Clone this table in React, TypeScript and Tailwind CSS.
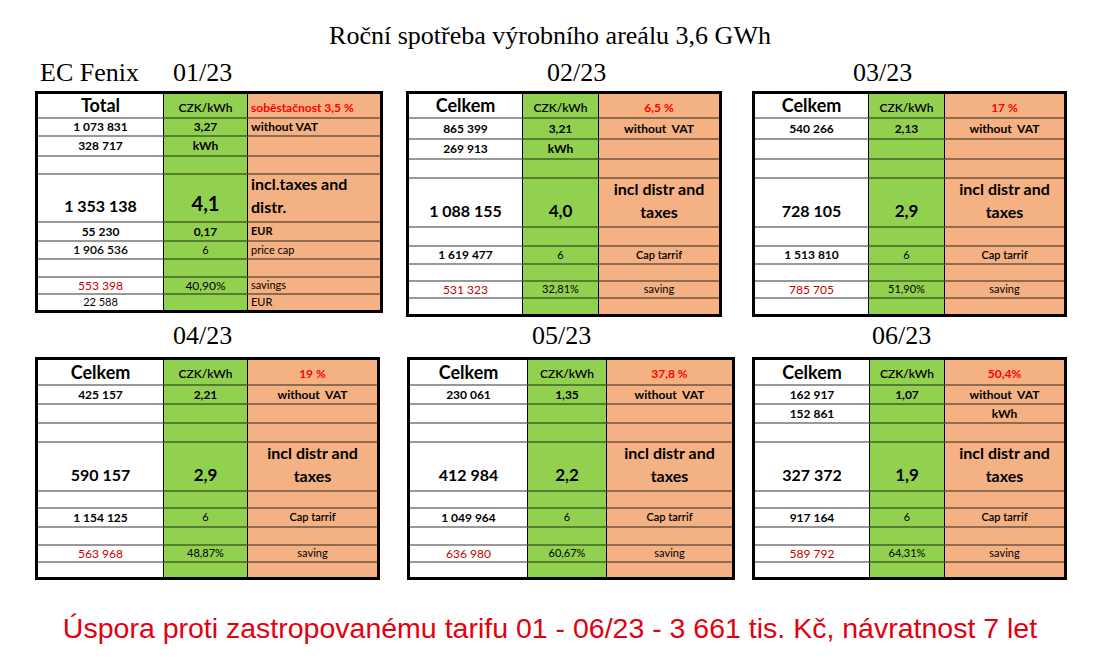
import type { ReactNode } from "react";

type Cell = { t?: ReactNode; c?: string };
type Row = { h: string; cells: [Cell, Cell, Cell]; big?: boolean };

const b12 = "text-[12px] font-bold";
const sb11 = "text-[11px] font-semibold";
const n11 = "text-[11px]";
const n12 = "text-[12px]";
const red = "text-[#ff0000] font-bold text-[12px]";
const redNum = "text-[#c00000] text-[12px]";
const bigNum = "text-[16px] font-bold";
const bigTxt = "text-[16px] font-bold leading-[23px] text-center";
const hdr = "text-[18px] font-bold";
const czk = "text-[12px] font-semibold pt-[4px]";

const e: Cell = {};

function Sheet({
  w,
  c1,
  c2,
  rows,
  leftText,
}: {
  w: string;
  c1: string;
  c2: string;
  rows: Row[];
  leftText?: boolean;
}) {
  return (
    <div className={`${w} flex flex-col border-[3px] border-black`}>
      {rows.map((r, i) => {
        const line = i === rows.length - 1 ? "" : "border-b-2 border-b-black/40";
        const align = r.big ? "items-end pb-[3px]" : "items-center";
        const [a, b, c] = r.cells;
        return (
          <div key={i} className={`flex ${r.h}`}>
            <div className={`${c1} shrink-0 flex justify-center bg-white ${align} ${line} ${a.c ?? ""}`}>{a.t}</div>
            <div
              className={`${c2} shrink-0 flex justify-center bg-[#92d050] border-x border-x-black ${align} ${line} ${b.c ?? ""}`}
            >
              {b.t}
            </div>
            <div
              className={`flex-1 flex bg-[#f4b183] ${leftText ? "justify-start pl-[3px]" : "justify-center"} ${align} ${line} ${c.c ?? ""}`}
            >
              {c.t}
            </div>
          </div>
        );
      })}
    </div>
  );
}

const topH = ["h-[25px]", "h-[21px]", "h-[20px]", "h-[19px]", "h-[49px]", "h-[19px]", "h-[18px]", "h-[17px]", "h-[17px]", "h-[15px]"];
const botH = ["h-[26px]", "h-[19px]", "h-[19px]", "h-[19px]", "h-[49px]", "h-[17px]", "h-[19px]", "h-[18px]", "h-[17px]", "h-[14px]"];

type Month = {
  pct: string;
  a: string;
  price: string;
  second?: [string, string];
  secondMid?: [string, string];
  total: string;
  incl: string;
  cap: string;
  save: string;
  perc: string;
};

function monthRows(h: string[], d: Month): Row[] {
  let second: [Cell, Cell, Cell] = [e, e, e];
  if (d.second) second = [{ t: d.second[0], c: b12 }, e, { t: d.second[1], c: b12 }];
  if (d.secondMid) second = [{ t: d.secondMid[0], c: b12 }, { t: d.secondMid[1], c: b12 }, e];
  return [
    { h: h[0], cells: [{ t: "Celkem", c: hdr }, { t: "CZK/kWh", c: czk }, { t: d.pct, c: `${red} pt-[4px]` }] },
    {
      h: h[1],
      cells: [
        { t: d.a, c: b12 },
        { t: d.price, c: b12 },
        { t: "without  VAT", c: `${b12} whitespace-pre` },
      ],
    },
    { h: h[2], cells: second },
    { h: h[3], cells: [e, e, e] },
    {
      h: h[4],
      big: true,
      cells: [
        { t: d.total, c: `${bigNum} pb-[2px]` },
        { t: d.incl, c: "text-[17px] font-bold pb-[1px]" },
        {
          t: (
            <span>
              incl distr and
              <br />
              taxes
            </span>
          ),
          c: bigTxt,
        },
      ],
    },
    { h: h[5], cells: [e, e, e] },
    { h: h[6], cells: [{ t: d.cap, c: b12 }, { t: "6", c: n11 }, { t: "Cap tarrif", c: sb11 }] },
    { h: h[7], cells: [e, e, e] },
    { h: h[8], cells: [{ t: d.save, c: redNum }, { t: d.perc, c: n11 }, { t: "saving", c: n11 }] },
    { h: h[9], cells: [e, e, e] },
  ];
}

const fenixRows: Row[] = [
  {
    h: "h-[25px]",
    cells: [
      { t: "Total", c: "text-[18px] font-bold" },
      { t: "CZK/kWh", c: czk },
      { t: "soběstačnost 3,5 %", c: `${red} pt-[4px]` },
    ],
  },
  { h: "h-[18px]", cells: [{ t: "1 073 831", c: b12 }, { t: "3,27", c: b12 }, { t: "without VAT", c: b12 }] },
  { h: "h-[20px]", cells: [{ t: "328 717", c: b12 }, { t: "kWh", c: b12 }, e] },
  { h: "h-[18px]", cells: [e, e, e] },
  {
    h: "h-[48px]",
    big: true,
    cells: [
      { t: "1 353 138", c: `${bigNum} pb-[1px]` },
      { t: "4,1", c: "text-[20px] font-bold" },
      {
        t: (
          <span>
            incl.taxes and
            <br />
            distr.
          </span>
        ),
        c: "text-[16px] font-bold leading-[23px]",
      },
    ],
  },
  { h: "h-[19px]", cells: [{ t: "55 230", c: b12 }, { t: "0,17", c: b12 }, { t: "EUR", c: "text-[11px] font-bold" }] },
  { h: "h-[18px]", cells: [{ t: "1 906 536", c: "text-[12px] font-semibold" }, { t: "6", c: n11 }, { t: "price cap", c: n11 }] },
  { h: "h-[18px]", cells: [e, e, e] },
  { h: "h-[17px]", cells: [{ t: "553 398", c: redNum }, { t: "40,90%", c: n12 }, { t: "savings", c: n11 }] },
  { h: "h-[15px]", cells: [{ t: "22 588", c: n11 }, e, { t: "EUR", c: n11 }] },
];

const serif = "font-['Liberation_Serif','Times_New_Roman',serif] text-[26px] leading-[30px] text-black";

export default function App() {
  return (
    <div className="w-[1100px] h-[671px] bg-white flex flex-col overflow-hidden font-['Lato','Noto_Sans',sans-serif] text-black">
      <div className="h-[58px] pt-[22px] text-center font-['Liberation_Serif','Times_New_Roman',serif] text-[26px] leading-[28px]">
        Roční spotřeba výrobního areálu 3,6 GWh
      </div>

      <div className="h-[263px] flex pl-[35px]">
        <div className="w-[348px] flex flex-col">
          <div className={`h-[33px] ${serif}`}>
            <span className="inline-block w-[138px] pl-[5px]">EC Fenix</span>
            <span>01/23</span>
          </div>
          <Sheet w="w-[348px]" c1="w-[125px]" c2="w-[85px]" rows={fenixRows} leftText />
        </div>
        <div className="ml-[23px] w-[316px] flex flex-col">
          <div className={`h-[33px] pl-[141px] ${serif}`}>02/23</div>
          <Sheet
            w="w-[316px]"
            c1="w-[113px]"
            c2="w-[77px]"
            rows={monthRows(topH, {
              pct: "6,5 %",
              a: "865 399",
              price: "3,21",
              secondMid: ["269 913", "kWh"],
              total: "1 088 155",
              incl: "4,0",
              cap: "1 619 477",
              save: "531 323",
              perc: "32,81%",
            })}
          />
        </div>
        <div className="ml-[30px] w-[315px] flex flex-col">
          <div className={`h-[33px] pl-[101px] ${serif}`}>03/23</div>
          <Sheet
            w="w-[315px]"
            c1="w-[113px]"
            c2="w-[77px]"
            rows={monthRows(topH, {
              pct: "17 %",
              a: "540 266",
              price: "2,13",
              total: "728 105",
              incl: "2,9",
              cap: "1 513 810",
              save: "785 705",
              perc: "51,90%",
            })}
          />
        </div>
      </div>

      <div className="h-[290px] flex pl-[35px]">
        <div className="w-[345px] flex flex-col">
          <div className={`h-[36px] pl-[138px] ${serif}`}>04/23</div>
          <Sheet
            w="w-[345px]"
            c1="w-[125px]"
            c2="w-[85px]"
            rows={monthRows(botH, {
              pct: "19 %",
              a: "425 157",
              price: "2,21",
              total: "590 157",
              incl: "2,9",
              cap: "1 154 125",
              save: "563 968",
              perc: "48,87%",
            })}
          />
        </div>
        <div className="ml-[27px] w-[328px] flex flex-col">
          <div className={`h-[36px] pl-[125px] ${serif}`}>05/23</div>
          <Sheet
            w="w-[328px]"
            c1="w-[117px]"
            c2="w-[80px]"
            rows={monthRows(botH, {
              pct: "37,8 %",
              a: "230 061",
              price: "1,35",
              total: "412 984",
              incl: "2,2",
              cap: "1 049 964",
              save: "636 980",
              perc: "60,67%",
            })}
          />
        </div>
        <div className="ml-[17px] w-[315px] flex flex-col">
          <div className={`h-[36px] pl-[120px] ${serif}`}>06/23</div>
          <Sheet
            w="w-[315px]"
            c1="w-[114px]"
            c2="w-[76px]"
            rows={monthRows(botH, {
              pct: "50,4%",
              a: "162 917",
              price: "1,07",
              second: ["152 861", "kWh"],
              total: "327 372",
              incl: "1,9",
              cap: "917 164",
              save: "589 792",
              perc: "64,31%",
            })}
          />
        </div>
      </div>

      <div className="text-center font-['Liberation_Sans','Arial',sans-serif] text-[28.5px] leading-[34px] text-[#e3000f]">
        Úspora proti zastropovanému tarifu 01 - 06/23 - 3 661 tis. Kč, návratnost 7 let
      </div>
    </div>
  );
}
